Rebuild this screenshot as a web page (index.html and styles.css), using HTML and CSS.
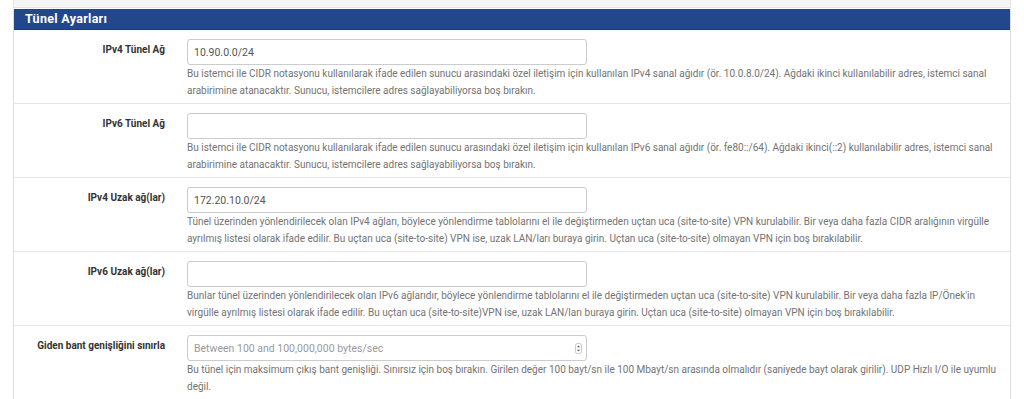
FILE: index.html
```html
<!DOCTYPE html>
<html lang="tr">
<head>
<meta charset="UTF-8">
<meta name="viewport" content="width=device-width, initial-scale=1.0">
<title>Tünel Ayarları</title>
<link rel="stylesheet" href="styles.css">
</head>
<body>

  <div class="page">
    <div class="prev-panel"></div>

    <div class="panel">
      <div class="panel-heading">Tünel Ayarları</div>

      <div class="form-group">
        <label class="form-label" for="tunnel4">IPv4 Tünel Ağ</label>
        <div class="form-field">
          <input type="text" id="tunnel4" class="form-control" value="10.90.0.0/24">
          <span class="help-block">Bu istemci ile CIDR notasyonu kullanılarak ifade edilen sunucu arasındaki özel iletişim için kullanılan IPv4 sanal ağıdır (ör. 10.0.8.0/24). Ağdaki ikinci kullanılabilir adres, istemci sanal arabirimine atanacaktır. Sunucu, istemcilere adres sağlayabiliyorsa boş bırakın.</span>
        </div>
      </div>

      <div class="form-group">
        <label class="form-label" for="tunnel6">IPv6 Tünel Ağ</label>
        <div class="form-field">
          <input type="text" id="tunnel6" class="form-control">
          <span class="help-block">Bu istemci ile CIDR notasyonu kullanılarak ifade edilen sunucu arasındaki özel iletişim için kullanılan IPv6 sanal ağıdır (ör. fe80::/64). Ağdaki ikinci(::2) kullanılabilir adres, istemci sanal arabirimine atanacaktır. Sunucu, istemcilere adres sağlayabiliyorsa boş bırakın.</span>
        </div>
      </div>

      <div class="form-group">
        <label class="form-label" for="remote4">IPv4 Uzak ağ(lar)</label>
        <div class="form-field">
          <input type="text" id="remote4" class="form-control" value="172.20.10.0/24">
          <span class="help-block">Tünel üzerinden yönlendirilecek olan IPv4 ağları, böylece yönlendirme tablolarını el ile değiştirmeden uçtan uca (site-to-site) VPN kurulabilir. Bir veya daha fazla CIDR aralığının virgülle ayrılmış listesi olarak ifade edilir. Bu uçtan uca (site-to-site) VPN ise, uzak LAN/ları buraya girin. Uçtan uca (site-to-site) olmayan VPN için boş bırakılabilir.</span>
        </div>
      </div>

      <div class="form-group">
        <label class="form-label" for="remote6">IPv6 Uzak ağ(lar)</label>
        <div class="form-field">
          <input type="text" id="remote6" class="form-control">
          <span class="help-block">Bunlar tünel üzerinden yönlendirilecek olan IPv6 ağlarıdır, böylece yönlendirme tablolarını el ile değiştirmeden uçtan uca (site-to-site) VPN kurulabilir. Bir veya daha fazla IP/Önek'in virgülle ayrılmış listesi olarak ifade edilir. Bu uçtan uca (site-to-site)VPN ise, uzak LAN/ları buraya girin. Uçtan uca (site-to-site) olmayan VPN için boş bırakılabilir.</span>
        </div>
      </div>

      <div class="form-group">
        <label class="form-label" for="bandwidth">Giden bant genişliğini sınırla</label>
        <div class="form-field">
          <div class="number-wrap">
            <input type="text" id="bandwidth" class="form-control" placeholder="Between 100 and 100,000,000 bytes/sec">
            <span class="spinner">
              <svg width="7" height="11" viewBox="0 0 7 11">
                <rect x="0.5" y="0.5" width="6" height="10" rx="2" fill="#fff" stroke="#c8c8c8"/>
                <path d="M1.8 4.3 L3.5 2.4 L5.2 4.3 Z" fill="#666"/>
                <path d="M1.8 6.7 L3.5 8.6 L5.2 6.7 Z" fill="#666"/>
              </svg>
            </span>
          </div>
          <span class="help-block">Bu tünel için maksimum çıkış bant genişliği. Sınırsız için boş bırakın. Girilen değer 100 bayt/sn ile 100 Mbayt/sn arasında olmalıdır (saniyede bayt olarak girilir). UDP Hızlı I/O ile uyumlu değil.</span>
        </div>
      </div>
    </div>
  </div>

</body>
</html>
```

FILE: styles.css
```css
body {
  margin: 0;
  font-family: Roboto, "Liberation Sans", Arial, sans-serif;
  background-color: #ffffff;
  color: #333;
}

.page {
  padding: 0 13px;
}

.prev-panel {
  height: 7px;
  background-color: #f5f5f5;
  border: 1px solid #e3e3e3;
  border-top: none;
  margin-bottom: 1px;
}

.panel {
  border: 1px solid #dddddd;
  border-top: none;
  background-color: #fff;
}

.panel-heading {
  background-color: #22488b;
  color: #fff;
  font-size: 12.5px;
  font-weight: bold;
  letter-spacing: 0.3px;
  height: 20px;
  line-height: 20px;
  padding: 0 11px;
  border-bottom: 1px solid #1b3c74;
}

.form-group {
  display: flex;
  padding: 9px 0 4px;
  border-bottom: 1px solid #e6e6e6;
}

.form-label {
  width: 151px;
  flex-shrink: 0;
  text-align: right;
  padding: 5px 11px 0 0;
  font-size: 10px;
  font-weight: bold;
  color: #333;
}

.form-field {
  flex: 1;
  padding: 0 7px 0 11px;
}

.form-control {
  display: block;
  width: 400px;
  height: 26px;
  box-sizing: border-box;
  padding: 4px 6px;
  border: 1px solid #cccccc;
  border-radius: 3px;
  font-family: Roboto, "Liberation Sans", Arial, sans-serif;
  font-size: 10.5px;
  color: #555;
  background-color: #fff;
}

.form-control::placeholder {
  color: #999;
}

.number-wrap {
  position: relative;
  width: 400px;
}

.spinner {
  position: absolute;
  right: 5px;
  top: 8px;
  line-height: 0;
}

.help-block {
  display: block;
  font-size: 10px;
  line-height: 17px;
  color: #737373;
}
```
